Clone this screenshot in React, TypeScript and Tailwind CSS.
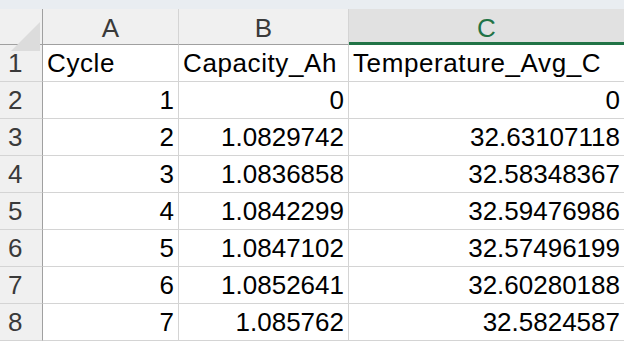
import React from "react";

const rows: [string, string, string, string][] = [
  ["1", "Cycle", "Capacity_Ah", "Temperature_Avg_C"],
  ["2", "1", "0", "0"],
  ["3", "2", "1.0829742", "32.63107118"],
  ["4", "3", "1.0836858", "32.58348367"],
  ["5", "4", "1.0842299", "32.59476986"],
  ["6", "5", "1.0847102", "32.57496199"],
  ["7", "6", "1.0852641", "32.60280188"],
  ["8", "7", "1.085762", "32.5824587"],
];

export default function App() {
  return (
    <div
      className="w-[624px] h-[343px] overflow-hidden bg-white text-black"
      style={{ fontFamily: '"Liberation Sans", Arial, sans-serif' }}
    >
      <div className="h-[9px] bg-[#e9edf1]" />
      <div className="flex h-[36px] text-[26px] leading-none text-[#3a3a3a]">
        <div className="w-[43px] h-full bg-[#f0f0f0] border-r border-b border-[#a0a0a0] relative">
          <svg className="absolute left-[10px] top-[13px]" width="30" height="30" viewBox="0 0 30 30">
            <polygon points="30,0 30,29 1,29" fill="#dcdcdc" />
          </svg>
        </div>
        <div className="w-[136px] h-full bg-[#f0f0f0] border-r border-b border-r-[#d4d4d4] border-b-[#a0a0a0] flex items-center justify-center pt-[2px]">
          A
        </div>
        <div className="w-[170px] h-full bg-[#f0f0f0] border-r border-b border-r-[#d4d4d4] border-b-[#a0a0a0] flex items-center justify-center pt-[2px]">
          B
        </div>
        <div className="flex-1 h-full bg-[#e1e1e1] border-b-[3px] border-[#217346] flex items-center justify-center pt-[4px] text-[#217346]">
          C
        </div>
      </div>
      {rows.map((r, i) => (
        <div
          key={i}
          className={`flex h-[37px] text-[26px] leading-none ${i === 0 ? "tracking-[0.6px]" : ""}`}
        >
          <div className="w-[43px] h-full bg-[#f0f0f0] border-r border-b border-r-[#a0a0a0] border-b-[#d4d4d4] flex items-center pl-[8px] text-[#3a3a3a] tracking-normal">
            {r[0]}
          </div>
          <div
            className={`w-[136px] h-full border-r border-b border-[#d4d4d4] flex items-center px-[4px] ${
              i === 0 ? "justify-start" : "justify-end"
            }`}
          >
            {r[1]}
          </div>
          <div
            className={`w-[170px] h-full border-r border-b border-[#d4d4d4] flex items-center px-[4px] ${
              i === 0 ? "justify-start" : "justify-end"
            }`}
          >
            {r[2]}
          </div>
          <div
            className={`flex-1 h-full border-b border-[#d4d4d4] flex items-center px-[4px] ${
              i === 0 ? "justify-start" : "justify-end"
            }`}
          >
            {r[3]}
          </div>
        </div>
      ))}
    </div>
  );
}
